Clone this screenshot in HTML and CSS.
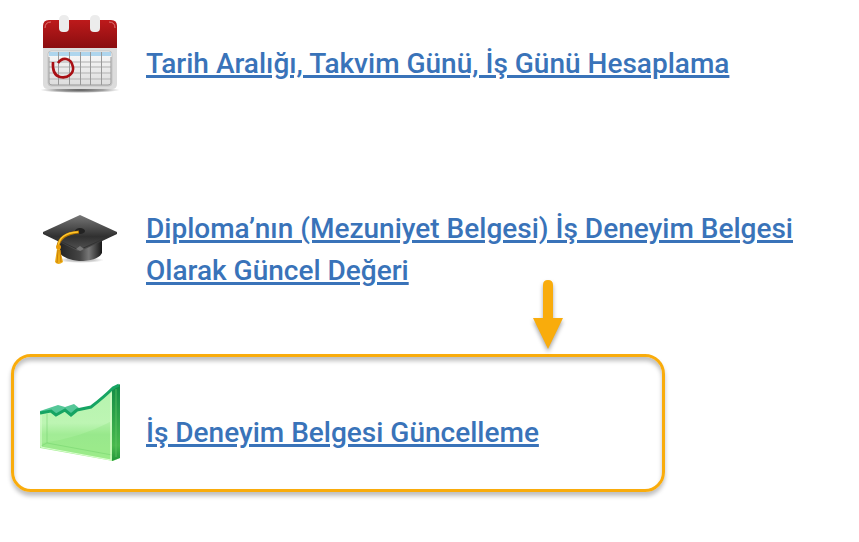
FILE: index.html
```html
<!DOCTYPE html>
<html lang="tr">
<head>
    <meta charset="UTF-8">
    <meta name="viewport" content="width=device-width, initial-scale=1.0">
    <title>Hesaplama Araçları</title>
    <link rel="stylesheet" href="styles.css">
</head>
<body>
    <ul class="tools">
        <li class="tool">
            <svg class="icon" viewBox="0 0 80 80" aria-hidden="true">
                <defs>
                    <linearGradient id="red" x1="0" y1="0" x2="0" y2="1">
                        <stop offset="0" stop-color="#bd1a1b"/>
                        <stop offset="1" stop-color="#8a0d10"/>
                    </linearGradient>
                    <linearGradient id="paper" x1="0" y1="0" x2="0" y2="1">
                        <stop offset="0" stop-color="#fafafa"/>
                        <stop offset="1" stop-color="#dcdcdc"/>
                    </linearGradient>
                    <radialGradient id="shade">
                        <stop offset="0" stop-color="#555"/>
                        <stop offset="0.6" stop-color="#888" stop-opacity="0.8"/>
                        <stop offset="1" stop-color="#999" stop-opacity="0"/>
                    </radialGradient>
                </defs>
                <ellipse cx="40" cy="76" rx="40" ry="3" fill="url(#shade)"/>
                <path d="M3 32H77V70Q77 75 72 75H8Q3 75 3 70Z" fill="#dcdcdc"/>
                <path d="M3 12Q3 6 9 6H71Q77 6 77 12V34H3Z" fill="url(#red)"/>
                <path d="M5 14Q5 8 11 8M75 14Q75 8 69 8" fill="none" stroke="#df7775"/>
                <rect x="8" y="37" width="64" height="35" rx="3" fill="url(#paper)" stroke="#c4c4c4"/>
                <path d="M9 38H71V42H9Z" fill="#aed5ed"/>
                <path d="M9 48H71M9 53H71M9 59H71M9 65H71" stroke="#c4c4c4" stroke-width="1.3"/>
                <path d="M18.5 38V71M29.5 38V71M40.5 38V71M50.5 38V71M61.5 38V71" stroke="#999"/>
                <path d="M9 43V69Q9 71 12 71H68Q71 71 71 69V43" fill="none" stroke="#999"/>
                <path d="M19 6Q19 1 24 1T29 6V14Q29 18 25 18H23Q19 18 19 14Z" fill="#ececec"/>
                <path d="M50 6Q50 1 55 1T60 6V14Q60 18 56 18H54Q50 18 50 14Z" fill="#ececec"/>
                <path d="M13 48Q12 61 20 63C28 65 34 59 33 53C31 43 22 43 18 49" fill="none" stroke="#a90f14" stroke-width="2.6"/>
            </svg>
            <a class="tool-link" href="#">Tarih Aralığı, Takvim Günü, İş Günü Hesaplama</a>
        </li>
        <li class="tool">
            <svg class="icon" viewBox="0 0 80 80" aria-hidden="true">
                <defs>
                    <linearGradient id="board" x1="0" y1="0" x2="0" y2="1">
                        <stop offset="0" stop-color="#777"/>
                        <stop offset="0.6" stop-color="#303030"/>
                        <stop offset="1" stop-color="#555"/>
                    </linearGradient>
                    <linearGradient id="cap" x1="0" y1="0" x2="1" y2="0">
                        <stop offset="0" stop-color="#222"/>
                        <stop offset="0.5" stop-color="#454545"/>
                        <stop offset="0.7" stop-color="#777"/>
                        <stop offset="1" stop-color="#171717"/>
                    </linearGradient>
                </defs>
                <ellipse cx="41" cy="60" rx="23" ry="3" fill="url(#shade)" opacity="0.5"/>
                <path d="M18 42L62 39V53Q58 61 39 61Q22 59 18 51Z" fill="url(#cap)"/>
                <path d="M40 15L77 32V34L41 51H38L3 34V32Z" fill="url(#board)"/>
                <path d="M3 33L39 50L77 33" fill="none" stroke="#333"/>
                <path d="M36 49L40 46L44 49L40 51Z" fill="#777"/>
                <ellipse cx="40" cy="31" rx="5" ry="3" fill="#222"/>
                <path d="M39 32Q19 34 18 47" fill="none" stroke="#b97900" stroke-width="3"/>
                <path d="M38 32Q19 33 18 47" fill="none" stroke="#ffc62b" stroke-width="1.5"/>
                <circle cx="18.5" cy="47" r="2.5" fill="#e79b08"/>
                <path d="M17 49H20L23 62Q18 66 15 62Z" fill="#edac16"/>
                <path d="M18 50L17 63M20 50L21 62" stroke="#c98006"/>
            </svg>
            <a class="tool-link" href="#">Diploma’nın (Mezuniyet Belgesi) İş Deneyim Belgesi Olarak Güncel Değeri</a>
        </li>
        <li class="tool highlight">
            <svg class="arrow" viewBox="0 0 30 70" aria-hidden="true">
                <path d="M10 5Q10 0 15 0T20 5V38H30L15 69L0 38H10Z" fill="#f9ac0c"/>
            </svg>
            <svg class="icon" viewBox="0 0 80 80" aria-hidden="true">
                <defs>
                    <linearGradient id="glass" x1="0" y1="0" x2="0" y2="1">
                        <stop offset="0" stop-color="#b5f3ae"/>
                        <stop offset="0.5" stop-color="#bdf5b3"/>
                        <stop offset="0.65" stop-color="#a2ec96"/>
                        <stop offset="1" stop-color="#a8f094"/>
                    </linearGradient>
                    <linearGradient id="side" x1="0" y1="0" x2="0" y2="1">
                        <stop offset="0" stop-color="#108b45"/>
                        <stop offset="0.8" stop-color="#48b84d"/>
                        <stop offset="1" stop-color="#22963a"/>
                    </linearGradient>
                </defs>
                <path d="M0 29L11 27L16 32L25 27L31 32L37 27L51 24L73 7L80 2V75L73 78L0 65Z" fill="url(#glass)"/>
                <path d="M0 28L18 22L25 24L34 21L39 25L31 32L25 27L16 32L10 28L0 30Z" fill="#55c798"/>
                <path d="M72 7L80 1V75L72 78Z" fill="url(#side)"/>
                <path d="M0 30L11 28L16 32L25 27L31 32L37 27L51 24Q64 14 73 5L79 2" fill="none" stroke="#16a463" stroke-width="3"/>
                <path d="M7 31V60L72 72M7 60L1 63" fill="none" stroke="#70cf6c" opacity="0.5"/>
                <path d="M1 32V64L71 77V10" fill="none" stroke="#dcffd1"/>
                <path d="M2 60Q40 55 70 39V76L2 64Z" fill="#72dc65" opacity="0.2"/>
                <path d="M76 6V74" stroke="#65c966" opacity="0.7"/>
            </svg>
            <a class="tool-link" href="#">İş Deneyim Belgesi Güncelleme</a>
        </li>
    </ul>
</body>
</html>
```
FILE: styles.css
```css
* { margin: 0; padding: 0; box-sizing: border-box; }
body {
    font-family: Roboto, sans-serif;
    background: #fff;
    color: #3973b9;
}
.tools {
    list-style: none;
    padding: 2px 11px 20px;
}
.tool {
    display: flex;
    align-items: center;
    gap: 26px;
    min-height: 104px;
    max-width: 800px;
    padding: 0 0 0 29px;
    margin-bottom: 82px;
}
.icon {
    width: 80px;
    height: 80px;
    flex-shrink: 0;
}
.tool-link {
    color: #3973b9;
    font-size: 28px;
    font-weight: 500;
    line-height: 42px;
    padding-top: 20px;
    text-decoration: underline;
    text-decoration-thickness: 3px;
    text-underline-offset: 2px;
}
.highlight {
    position: relative;
    max-width: 654px;
    min-height: 138px;
    padding-left: 26px;
    margin-top: -20px;
    margin-bottom: 0;
    border: 3px solid #f9ac0c;
    border-radius: 20px;
    box-shadow: 0 4px 4px rgba(0,0,0,0.25), inset 0 4px 4px rgba(0,0,0,0.25);
}
.arrow {
    position: absolute;
    top: -77px;
    left: 519px;
    width: 30px;
    height: 70px;
    overflow: visible;
    filter: drop-shadow(0 3px 2px rgba(0,0,0,0.35));
}
```
